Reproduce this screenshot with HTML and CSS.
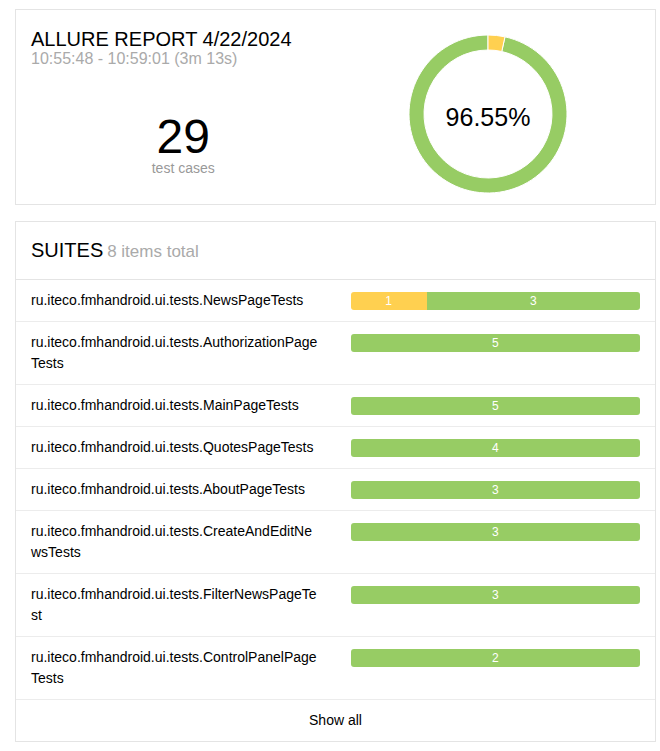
FILE: index.html
```html
<!DOCTYPE html>
<html>
<head>
<meta charset="utf-8">
<link rel="stylesheet" href="styles.css">
</head>
<body>
<section class="card summary">
  <div class="summary-left">
    <div class="title">ALLURE REPORT 4/22/2024</div>
    <div class="subtitle">10:55:48 - 10:59:01 (3m 13s)</div>
    <div class="stat">
      <div class="stat-num">29</div>
      <div class="stat-label">test cases</div>
    </div>
  </div>
  <div class="summary-right">
    <svg class="donut" width="158" height="158" viewBox="0 0 158 158">
      <path d="M95.983 1.847 A79 79 0 1 1 79 0 L79 15 A64 64 0 1 0 92.758 16.496 Z" fill="#97cc64" stroke="#fff" stroke-width="1"/>
      <path d="M79 0 A79 79 0 0 1 95.983 1.847 L92.758 16.496 A64 64 0 0 0 79 15 Z" fill="#ffd050" stroke="#fff" stroke-width="1"/>
      <text x="79" y="91" text-anchor="middle" class="donut-text">96.55%</text>
    </svg>
  </div>
</section>

<section class="card suites">
  <div class="suites-head"><span class="suites-title">SUITES</span> <span class="suites-count">8 items total</span></div>
  <div class="row">
    <div class="name">ru.iteco.fmhandroid.ui.tests.NewsPageTests</div>
    <div class="barcol"><div class="bar"><div class="seg broken" style="width:26.3%">1</div><div class="seg passed grow">3</div></div></div>
  </div>
  <div class="row">
    <div class="name">ru.iteco.fmhandroid.ui.tests.AuthorizationPageTests</div>
    <div class="barcol"><div class="bar"><div class="seg passed grow">5</div></div></div>
  </div>
  <div class="row">
    <div class="name">ru.iteco.fmhandroid.ui.tests.MainPageTests</div>
    <div class="barcol"><div class="bar"><div class="seg passed grow">5</div></div></div>
  </div>
  <div class="row">
    <div class="name">ru.iteco.fmhandroid.ui.tests.QuotesPageTests</div>
    <div class="barcol"><div class="bar"><div class="seg passed grow">4</div></div></div>
  </div>
  <div class="row">
    <div class="name">ru.iteco.fmhandroid.ui.tests.AboutPageTests</div>
    <div class="barcol"><div class="bar"><div class="seg passed grow">3</div></div></div>
  </div>
  <div class="row">
    <div class="name">ru.iteco.fmhandroid.ui.tests.CreateAndEditNewsTests</div>
    <div class="barcol"><div class="bar"><div class="seg passed grow">3</div></div></div>
  </div>
  <div class="row">
    <div class="name">ru.iteco.fmhandroid.ui.tests.FilterNewsPageTest</div>
    <div class="barcol"><div class="bar"><div class="seg passed grow">3</div></div></div>
  </div>
  <div class="row">
    <div class="name">ru.iteco.fmhandroid.ui.tests.ControlPanelPageTests</div>
    <div class="barcol"><div class="bar"><div class="seg passed grow">2</div></div></div>
  </div>
  <div class="show-all">Show all</div>
</section>
</body>
</html>
```

FILE: styles.css
```css
html, body {
  background: #fff;
}
body {
  margin: 9px 4px 0 15px;
  font-family: "Liberation Sans", Arial, Helvetica, sans-serif;
  font-size: 14px;
  color: #000;
}
.card {
  border: 1px solid #e4e4e4;
  background: #fff;
}
.summary {
  display: flex;
  padding: 18px 15px 11px 15px;
}
.summary-left,
.summary-right {
  flex: 1 1 0;
  min-width: 0;
}
.title {
  font-size: 20px;
  line-height: 22px;
}
.subtitle {
  font-size: 16px;
  line-height: 18px;
  color: #aaa;
}
.stat {
  margin-top: 44px;
  text-align: center;
}
.stat-num {
  font-size: 48px;
  line-height: 50px;
}
.stat-label {
  font-size: 14px;
  line-height: 13px;
  color: #999;
}
.summary-right {
  display: flex;
  justify-content: center;
  padding-top: 7px;
}
.donut {
  display: block;
  overflow: visible;
}
.donut-text {
  font-family: "Liberation Sans", Arial, Helvetica, sans-serif;
  font-size: 25px;
  fill: #000;
}
.suites {
  margin-top: 16px;
}
.suites-head {
  padding: 17px 15px 15px 15px;
  line-height: 23px;
  border-bottom: 1px solid #e4e4e4;
}
.suites-title {
  font-size: 20px;
}
.suites-count {
  font-size: 17px;
  color: #aaa;
}
.row {
  display: flex;
  border-bottom: 1px solid #ececec;
}
.name,
.barcol {
  flex: 1 1 0;
  min-width: 0;
  padding: 10px 15px;
  line-height: 21px;
}
.name {
  word-break: break-all;
}
.bar {
  display: flex;
  height: 18px;
  margin-top: 2px;
  border-radius: 3px;
  overflow: hidden;
}
.seg {
  color: #fff;
  font-size: 12px;
  line-height: 18px;
  text-align: center;
}
.grow {
  flex: 1 1 0;
}
.passed {
  background: #97cc64;
}
.broken {
  background: #ffd050;
}
.show-all {
  padding: 10px 15px;
  line-height: 21px;
  text-align: center;
}
```
